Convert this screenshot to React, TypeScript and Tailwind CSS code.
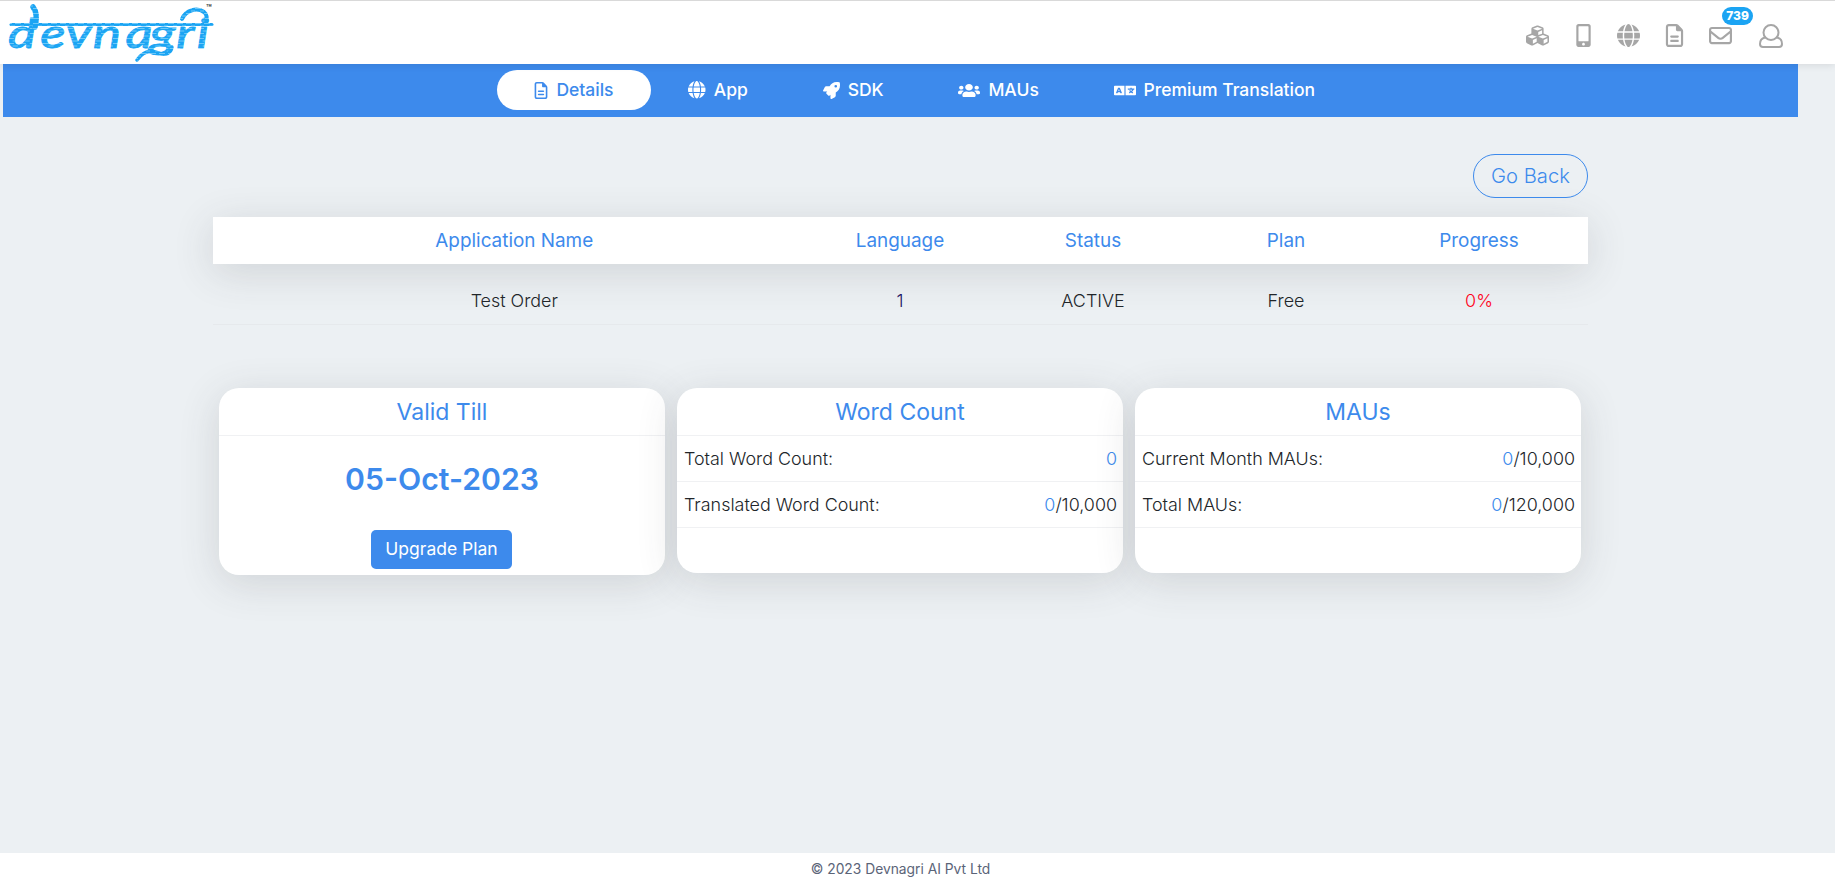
import type { ReactNode } from "react";
import { FaCubes, FaLanguage, FaMobileAlt, FaRocket, FaUsers } from "react-icons/fa";
import { FaGlobe, FaRegEnvelope, FaRegFileLines } from "react-icons/fa6";

function Logo() {
  return (
    <svg width="212" height="62" viewBox="0 0 212 62" className="ml-[6px] mt-[1px]">
      <defs>
        <pattern id="weave" width="9" height="5" patternUnits="userSpaceOnUse">
          <rect width="9" height="5" fill="#1ba4f3" />
          <path d="M0 1.500h6M5 4h4" stroke="#6cc8f8" strokeWidth="1" />
        </pattern>
      </defs>
      <text
        transform="scale(1.32 1)"
        x="1.500 26 45.500 66 90.500 109 129 144.500"
        y="46"
        fontSize="40"
        fontStyle="italic"
        fontWeight="400"
        fontFamily="Lato, sans-serif"
        fill="url(#weave)"
        stroke="url(#weave)"
        strokeWidth="0.900"
      >
        devnagri
      </text>
      <g fill="none" stroke="url(#weave)" strokeLinecap="round">
        <path d="M5 22.500H206" strokeWidth="3" />
        <path d="M27 5c4 5 4 12 2 20" strokeWidth="5.500" />
        <path d="M176 17c4-9 15-12 22-7 4 3 3 8 2 12" strokeWidth="4" />
        <path d="M131 58c7-10 15-10 22-7 7 3 12 0 13-6" strokeWidth="3.500" />
      </g>
      <text x="200" y="9" fontSize="9" fontWeight="700" fontFamily="Inter, sans-serif" fill="#444">
        ™
      </text>
    </svg>
  );
}

function UserOutline() {
  return (
    <svg width="24" height="24" viewBox="0 0 24 24" fill="none" stroke="#a6a6a6" strokeWidth="2">
      <circle cx="12" cy="8.500" r="7.500" />
      <path d="M6 13.500c-3 .7-5 3.300-5 6.500 0 1.800 1.200 3 3 3h16c1.800 0 3-1.200 3-3 0-3.200-2-5.800-5-6.500" />
    </svg>
  );
}

function Tab({ icon, label, active }: { icon: ReactNode; label: string; active?: boolean }) {
  return (
    <a
      className={
        active
          ? "flex h-10 items-center gap-[8px] rounded-full bg-white px-[37.400px] text-[#3d8aec]"
          : "flex h-10 items-center gap-[8px] px-[37.400px] text-white"
      }
    >
      {icon}
      <span className="pt-[1px]">{label}</span>
    </a>
  );
}

function StatRow({ label, used, total }: { label: string; used: string; total?: string }) {
  return (
    <div className="flex h-[46px] items-center justify-between border-b border-[#f0f1f3] pl-[7px] pr-[6px] pt-[1px]">
      <span>{label}</span>
      <span>
        <span className="text-[#3d8aec]">{used}</span>
        {total ? `/${total}` : ""}
      </span>
    </div>
  );
}

function Card({ title, children, tall }: { title: string; children: ReactNode; tall?: boolean }) {
  return (
    <section
      className={
        tall
          ? "h-[187px] w-[446px] rounded-[20px] bg-white shadow-[0_8px_40px_rgba(60,60,70,0.16)]"
          : "h-[185px] w-[446px] rounded-[20px] bg-white shadow-[0_8px_40px_rgba(60,60,70,0.16)]"
      }
    >
      <h2 className="flex h-12 items-center justify-center border-b border-[#f0f1f3] pt-[2px] text-[23px] font-normal text-[#3d8aec]">
        {title}
      </h2>
      {children}
    </section>
  );
}

const columns = "grid grid-cols-[590.500px_repeat(4,193px)] items-center text-center";

export default function App() {
  return (
    <div className="flex h-[883px] flex-col overflow-hidden bg-[#ecf0f3] font-['Inter',sans-serif] text-[17.900px] font-light text-[#212529]">
      <header className="relative z-10 flex h-16 shrink-0 justify-between border-t border-[#d9d9d9] bg-white shadow-[0_1px_8px_rgba(0,0,0,0.1)]">
        <Logo />
        <nav className="flex items-center pr-[52px] pt-[6px] text-[#a6a6a6]">
          <span className="flex w-[46px] justify-center">
            <FaCubes size={23} />
          </span>
          <span className="flex w-[46px] justify-center">
            <FaMobileAlt size={23} />
          </span>
          <span className="flex w-[45px] justify-center">
            <FaGlobe size={23} />
          </span>
          <span className="flex w-[47px] justify-center">
            <FaRegFileLines size={23} />
          </span>
          <span className="relative flex w-[45px] justify-center">
            <FaRegEnvelope size={23} />
            <span className="absolute -top-[17px] left-[24px] flex h-[18px] w-[31px] items-center justify-center rounded-full bg-[#1ba4f3] text-[12px] font-extrabold text-white">
              739
            </span>
          </span>
          <span className="ml-4">
            <UserOutline />
          </span>
        </nav>
      </header>

      <nav className="relative z-0 ml-[3px] flex h-[53px] w-[1795px] shrink-0 items-center bg-[#3d8aec] pl-[494px] pb-[1px] text-[17.500px] font-medium">
        <Tab active icon={<FaRegFileLines className="h-[17px] w-[14px]" />} label="Details" />
        <Tab icon={<FaGlobe size={17.500} />} label="App" />
        <Tab icon={<FaRocket size={17} />} label="SDK" />
        <Tab icon={<FaUsers preserveAspectRatio="none" className="h-[15px] w-[22px]" />} label="MAUs" />
        <Tab icon={<FaLanguage preserveAspectRatio="none" className="h-[15px] w-[22px]" />} label="Premium Translation" />
      </nav>

      <main className="ml-[213px] w-[1375px] grow">
        <div className="flex justify-end pt-[37px]">
          <button className="h-11 w-[115px] rounded-full border border-[#3d8aec] text-[20.200px] font-light text-[#3d8aec]">
            Go Back
          </button>
        </div>
        <div className={`${columns} mt-[19px] h-[47px] bg-white pt-[2px] text-[18.900px] font-normal text-[#3d8aec] shadow-[0_8px_40px_rgba(60,60,70,0.16)]`}>
          <span className="pl-3">Application Name</span>
          <span>Language</span>
          <span>Status</span>
          <span>Plan</span>
          <span>Progress</span>
        </div>
        <div className={`${columns} h-[61px] border-b border-[#e6e9ec] pt-[14px]`}>
          <span className="pl-3">Test Order</span>
          <span className="text-[#1b1464]">1</span>
          <span>ACTIVE</span>
          <span>Free</span>
          <span className="text-[#ff0018]">0%</span>
        </div>

        <div className="flex items-start gap-3 pl-[6px] pt-[63px]">
          <Card title="Valid Till" tall>
            <div className="flex flex-col items-center">
              <p className="mt-[22px] text-[30.200px] font-semibold leading-[42px] text-[#3d8aec]">05-Oct-2023</p>
              <button className="mr-px mt-[30px] h-[39px] w-[141px] rounded-[5px] bg-[#3d8aec] text-[17.500px] font-normal text-white">
                Upgrade Plan
              </button>
            </div>
          </Card>
          <Card title="Word Count">
            <StatRow label="Total Word Count:" used="0" />
            <StatRow label="Translated Word Count:" used="0" total="10,000" />
          </Card>
          <Card title="MAUs">
            <StatRow label="Current Month MAUs:" used="0" total="10,000" />
            <StatRow label="Total MAUs:" used="0" total="120,000" />
          </Card>
        </div>
      </main>

      <footer className="flex h-[30px] shrink-0 items-center justify-center bg-white pr-[34px] pt-[2px] text-[13.800px] font-normal text-[#5b6478]">
        © 2023 Devnagri AI Pvt Ltd
      </footer>
    </div>
  );
}
